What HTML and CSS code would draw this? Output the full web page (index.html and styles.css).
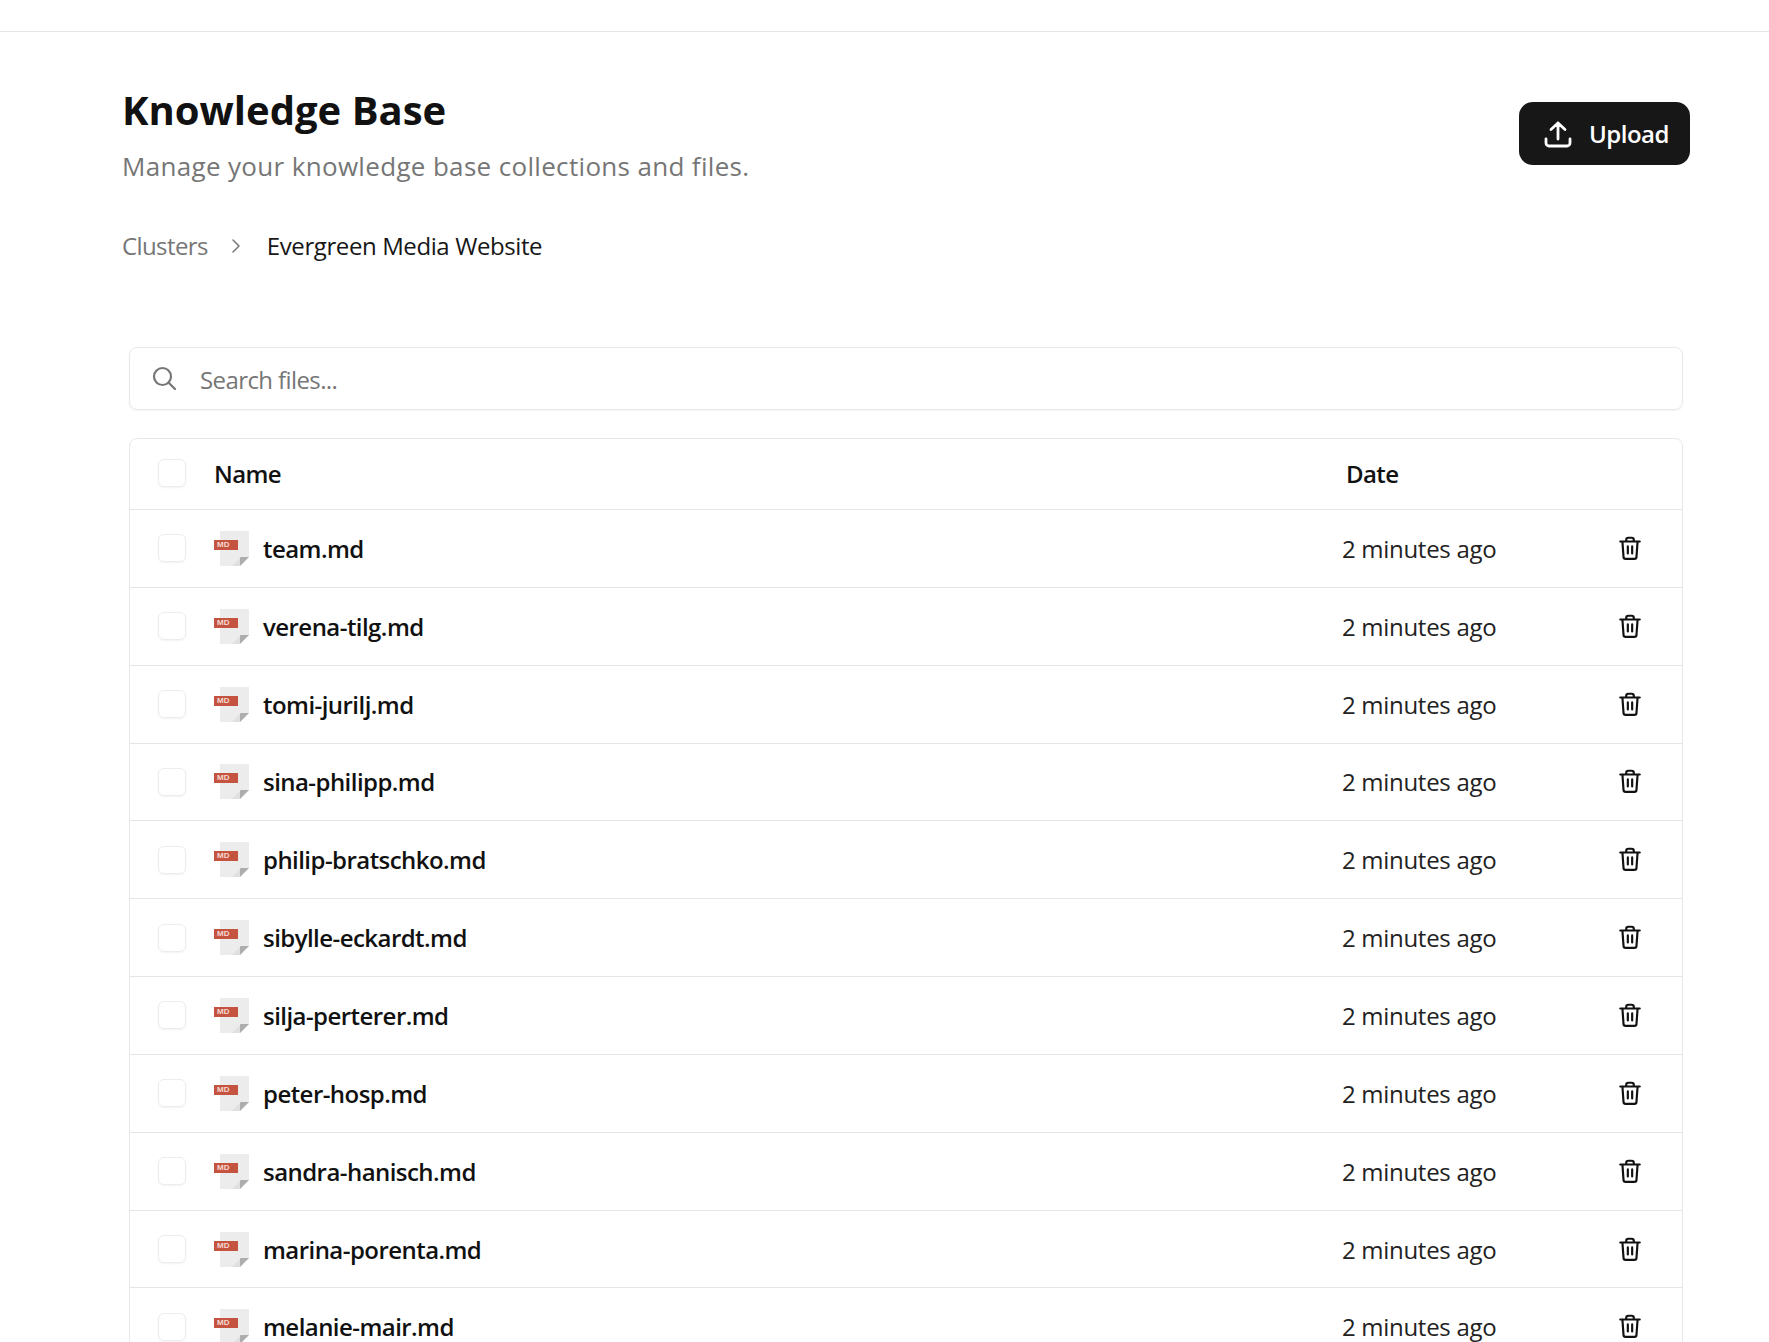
FILE: index.html
```html
<!DOCTYPE html>
<html lang="en">
<head>
    <meta charset="UTF-8">
    <title>Knowledge Base</title>
    <link rel="stylesheet" href="styles.css">
</head>
<body>
    <svg class="sprites" width="0" height="0">
        <symbol id="file-md" viewBox="0 0 35 35">
            <path d="M6 0H35V26L26 35H6Z" fill="#ececec"/>
            <path d="M26 35L35 26H27Q26 26 26 27Z" fill="#adadad"/>
            <path d="M18 35L26 27V35Z" fill="#e0e0e0"/>
            <rect x="0" y="9" width="24" height="10" fill="#c4533f"/>
        </symbol>
        <symbol id="trash" viewBox="0 0 24 24">
            <path d="M3 6H21M8.500 6V4.500A2 2 0 0 1 10.500 2.500H13.500A2 2 0 0 1 15.500 4.500V6M5 6L6 20A2 2 0 0 0 8 22H16A2 2 0 0 0 18 20L19 6M10 10.500V17M14 10.500V17" fill="none" stroke="currentColor" stroke-width="2" stroke-linecap="round" stroke-linejoin="round"/>
        </symbol>
    </svg>

    <div class="topbar"></div>

    <main class="page">
        <header class="page-head">
            <div>
                <h1 class="title">Knowledge Base</h1>
                <p class="subtitle">Manage your knowledge base collections and files.</p>
            </div>
            <button class="upload-btn">
                <svg class="upload-icon" viewBox="0 0 28 28" fill="none" stroke="currentColor" stroke-width="2.800" stroke-linecap="round" stroke-linejoin="round">
                    <path d="M14 19V3M7 9.500L14 3L21 9.500M2 19V23A3 3 0 0 0 5 26H23A3 3 0 0 0 26 23V19"/>
                </svg>
                Upload
            </button>
        </header>

        <nav class="crumbs">
            <span class="crumb-link">Clusters</span>
            <svg class="crumb-sep" viewBox="0 0 12 18" fill="none" stroke="currentColor" stroke-width="1.500" stroke-linecap="round" stroke-linejoin="round">
                <path d="M3 3L9 9L3 15"/>
            </svg>
            <span class="crumb-current">Evergreen Media Website</span>
        </nav>

        <div class="search">
            <svg class="search-icon" viewBox="0 0 24 24" fill="none" stroke="currentColor" stroke-width="2.200" stroke-linecap="round">
                <circle cx="10.500" cy="10.500" r="8.500"/>
                <path d="M16.500 16.500L23 23"/>
            </svg>
            <span class="search-text">Search files...</span>
        </div>

        <section class="table" id="table">
            <div class="row row-head">
                <span class="check"></span>
                <span class="head-name">Name</span>
                <span class="head-date">Date</span>
            </div>
        </section>
    </main>

    <script src="app.js"></script>
</body>
</html>
```

FILE: styles.css
```css
* {
    box-sizing: border-box;
}

html, body {
    height: 100vh;
    margin: 0;
    overflow: hidden;
}

body {
    background-color: #ffffff;
    color: #111111;
    font-family: 'Open Sans', 'Noto Sans', sans-serif;
}

.sprites {
    display: block;
    height: 0;
}

.topbar {
    height: 32px;
    border-bottom: 1px solid #e5e5e5;
}

.page {
    padding: 51px 79px 0 122px;
}

.page-head {
    display: flex;
    justify-content: space-between;
    align-items: flex-start;
}

.title {
    margin: 0;
    font-size: 40px;
    line-height: 54px;
    font-weight: 700;
    color: #111111;
}

.subtitle {
    margin: 13px 0 0;
    font-size: 26px;
    line-height: 32px;
    letter-spacing: 0.33px;
    color: #767676;
}

.upload-btn {
    display: flex;
    align-items: center;
    gap: 17px;
    width: 171px;
    height: 63px;
    margin-top: 19px;
    padding: 0 0 0 25px;
    border: none;
    border-radius: 14px;
    background-color: #171717;
    color: #ffffff;
    font-family: inherit;
    font-size: 24px;
    font-weight: 600;
    letter-spacing: -0.5px;
}

.upload-icon {
    width: 28px;
    height: 28px;
}

.crumbs {
    display: flex;
    align-items: center;
    margin-top: 47px;
    font-size: 24px;
    line-height: 34px;
    letter-spacing: -0.4px;
}

.crumb-link {
    letter-spacing: -0.6px;
    color: #767676;
}

.crumb-sep {
    width: 12px;
    height: 18px;
    margin: 0 25px 0 22px;
    color: #767676;
}

.crumb-current {
    color: #171717;
}

.search {
    display: flex;
    align-items: center;
    height: 63px;
    margin: 84px 7px 0;
    padding-left: 22px;
    border: 1px solid #e8e8e8;
    border-radius: 8px;
    box-shadow: 0 1px 2px rgba(0, 0, 0, 0.05);
}

.search-icon {
    width: 24px;
    height: 24px;
    margin-bottom: 2px;
    color: #767676;
}

.search-text {
    margin: 2px 0 0 24px;
    font-size: 24px;
    letter-spacing: -0.6px;
    color: #767676;
}

.table {
    margin: 28px 7px 0;
    border: 1px solid #e8e8e8;
    border-radius: 8px;
}

.row {
    display: grid;
    grid-template-columns: 28px 1fr 288px;
    align-items: center;
    height: 77.85px;
    padding-left: 28px;
    border-top: 1px solid #e5e5e5;
    font-size: 24px;
}

.row-head {
    height: 70px;
    padding-bottom: 2px;
    border-top: none;
    font-weight: 600;
    letter-spacing: -0.6px;
}

.check {
    width: 28px;
    height: 28px;
    border: 1px solid #ececec;
    border-radius: 6px;
    box-shadow: 0 1px 2px rgba(0, 0, 0, 0.05);
}

.head-name {
    margin-left: 28px;
}

.head-date {
    margin-left: -48px;
}

.file-cell {
    display: flex;
    align-items: center;
    gap: 14px;
    margin-left: 28px;
}

.file-icon {
    position: relative;
    width: 35px;
    height: 35px;
}

.file-icon svg {
    display: block;
    width: 35px;
    height: 35px;
}

.file-badge {
    position: absolute;
    left: 3px;
    top: 9px;
    font-family: 'Liberation Sans', sans-serif;
    font-size: 8px;
    line-height: 10px;
    font-weight: 700;
    letter-spacing: 0.2px;
    color: #f6d9d2;
}

.file-name {
    font-weight: 550;
    letter-spacing: -0.55px;
}

.date-cell {
    display: flex;
    align-items: center;
    justify-content: space-between;
    margin-left: -52px;
    padding-right: 39px;
    letter-spacing: -0.3px;
    color: #222222;
}

.delete-icon {
    width: 26px;
    height: 26px;
    margin-bottom: 1px;
    color: #111111;
}
```

FILE: app.js
```js
const files = [
    'team.md',
    'verena-tilg.md',
    'tomi-jurilj.md',
    'sina-philipp.md',
    'philip-bratschko.md',
    'sibylle-eckardt.md',
    'silja-perterer.md',
    'peter-hosp.md',
    'sandra-hanisch.md',
    'marina-porenta.md',
    'melanie-mair.md'
];

const table = document.getElementById('table');

files.forEach(name => {
    const row = document.createElement('div');
    row.className = 'row';
    row.innerHTML = `
        <span class="check"></span>
        <div class="file-cell">
            <span class="file-icon"><svg><use href="#file-md"/></svg><span class="file-badge">MD</span></span>
            <span class="file-name">${name}</span>
        </div>
        <div class="date-cell">
            <span>2 minutes ago</span>
            <svg class="delete-icon"><use href="#trash"/></svg>
        </div>`;
    table.appendChild(row);
});
```
